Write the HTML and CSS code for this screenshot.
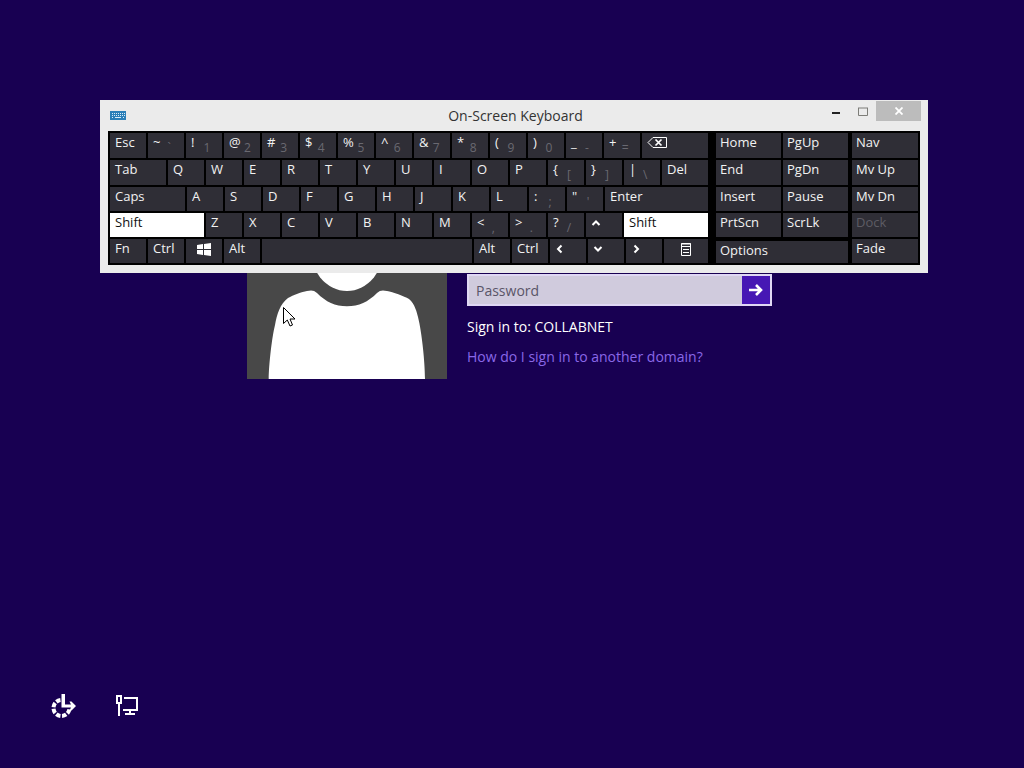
FILE: index.html
```html
<!DOCTYPE html>
<html lang="en">
  <head>
    <meta charset="utf-8"/>
    <title>Sign in</title>
    <meta name="viewport" content="width=device-width, initial-scale=1.0"/>
    <link rel="stylesheet" href="styles.css">
  </head>
  <body>
    <main class="signin">
      <svg class="avatar" viewBox="0 0 200 200" aria-hidden="true">
        <rect width="200" height="200" fill="#484848"/>
        <ellipse cx="100" cy="66" rx="38" ry="46" fill="#fff"/>
        <path d="M21.700 200C22 184 25 158 28 146C30 135 33 125 41 119C46 116 55 113 60 112C64 111 67 111 70 114C79 123 88 127.300 100 127.300C112 127.300 121 123 130 114C133 111 136 111 140 112C146 113 157 117 162 120C168 125 170 134 171 138C175 154 178 184 178 200Z" fill="#fff"/>
      </svg>
      <form class="login">
        <div class="password">
          <input type="password" placeholder="Password" aria-label="Password">
          <button class="submit" type="button" aria-label="Submit">
            <svg width="14" height="12" viewBox="0 0 14 12"><path d="M0 6H12M7 1L12 6L7 11" fill="none" stroke="#fff" stroke-width="2.600"/></svg>
          </button>
        </div>
        <p class="domain">Sign in to: COLLABNET</p>
        <a class="help" href="#">How do I sign in to another domain?</a>
      </form>
    </main>

    <footer class="tools">
      <button type="button" aria-label="Ease of access">
        <svg width="26" height="26" viewBox="0 0 26 26">
          <circle cx="10.500" cy="15" r="8" fill="none" stroke="#fff" stroke-width="4" pathLength="360" stroke-dasharray="32 12 32 12 32 12 32 12 32 12 32 98" stroke-dashoffset="-10"/>
          <path d="M10.500 1H14V11.500H20L18.500 8.500H20.500L25 13L20.500 17.500H18.500L20 14.500H10.500Z" fill="#fff"/>
        </svg>
      </button>
      <button type="button" aria-label="Network">
        <svg width="24" height="24" viewBox="0 0 24 24" fill="none" stroke="#fff" stroke-width="2">
          <path d="M9 4H22V16H8M15 16V20M10 20H20"/>
          <path d="M2 2H6V9H2ZM4 9V22"/>
        </svg>
      </button>
    </footer>

    <section class="window">
      <header class="titlebar">
        <svg class="app-icon" width="16" height="9" viewBox="0 0 16 9">
          <rect width="16" height="9" fill="#2b7fb8"/>
          <path d="M2 2.500H15M2 4.500H15" stroke="#d9ecf7" stroke-dasharray="1 1"/>
          <path d="M2 6.500H3M5 6.500H11M13 6.500H14" stroke="#d9ecf7"/>
        </svg>
        <h1>On-Screen Keyboard</h1>
        <div class="controls">
          <button class="minimize" type="button" aria-label="Minimize"><svg width="8" height="2"><rect width="8" height="2" fill="#222"/></svg></button>
          <button class="maximize" type="button" aria-label="Maximize"><svg width="10" height="9"><path d="M.5 1V8.500H9.500V1M0 1H10" fill="none" stroke="#7d7d78"/></svg></button>
          <button class="close" type="button" aria-label="Close"><svg width="8" height="8"><path d="M.5 .5L7.500 7.500M7.500 .5L.5 7.500" stroke="#fff" stroke-width="1.800"/></svg></button>
        </div>
      </header>

      <div class="keyboard">
        <div class="keys">
          <div class="row">
            <button class="key">Esc</button>
            <button class="key">~<sub>`</sub></button>
            <button class="key">!<sub>1</sub></button>
            <button class="key">@<sub>2</sub></button>
            <button class="key">#<sub>3</sub></button>
            <button class="key">$<sub>4</sub></button>
            <button class="key">%<sub>5</sub></button>
            <button class="key">^<sub>6</sub></button>
            <button class="key">&amp;<sub>7</sub></button>
            <button class="key">*<sub>8</sub></button>
            <button class="key">(<sub>9</sub></button>
            <button class="key">)<sub>0</sub></button>
            <button class="key">_<sub>-</sub></button>
            <button class="key">+<sub>=</sub></button>
            <button class="key backspace" aria-label="Backspace">
              <svg width="20" height="11" viewBox="0 0 20 11" fill="none" stroke="#fff"><path d="M6 .5H19.500V10.500H6L1 5.500Z"/><path d="M8.500 2.500L14.500 8.500M14.500 2.500L8.500 8.500" stroke-width="1.700"/></svg>
            </button>
          </div>
          <div class="row">
            <button class="key tab">Tab</button>
            <button class="key">Q</button>
            <button class="key">W</button>
            <button class="key">E</button>
            <button class="key">R</button>
            <button class="key">T</button>
            <button class="key">Y</button>
            <button class="key">U</button>
            <button class="key">I</button>
            <button class="key">O</button>
            <button class="key">P</button>
            <button class="key">{<sub>[</sub></button>
            <button class="key">}<sub>]</sub></button>
            <button class="key">|<sub>\</sub></button>
            <button class="key del">Del</button>
          </div>
          <div class="row">
            <button class="key caps">Caps</button>
            <button class="key">A</button>
            <button class="key">S</button>
            <button class="key">D</button>
            <button class="key">F</button>
            <button class="key">G</button>
            <button class="key">H</button>
            <button class="key">J</button>
            <button class="key">K</button>
            <button class="key">L</button>
            <button class="key">:<sub>;</sub></button>
            <button class="key">"<sub>'</sub></button>
            <button class="key enter">Enter</button>
          </div>
          <div class="row">
            <button class="key shift-left pressed">Shift</button>
            <button class="key">Z</button>
            <button class="key">X</button>
            <button class="key">C</button>
            <button class="key">V</button>
            <button class="key">B</button>
            <button class="key">N</button>
            <button class="key">M</button>
            <button class="key">&lt;<sub>,</sub></button>
            <button class="key">&gt;<sub>.</sub></button>
            <button class="key">?<sub>/</sub></button>
            <button class="key arrow" aria-label="Up"><svg width="10" height="10"><path d="M1.500 7L5 3.500L8.500 7"/></svg></button>
            <button class="key shift-right pressed">Shift</button>
          </div>
          <div class="row">
            <button class="key">Fn</button>
            <button class="key">Ctrl</button>
            <button class="key icon" aria-label="Windows">
              <svg width="14" height="13" viewBox="0 0 14 13" fill="#fff"><path d="M0 2L6 1V6H0ZM7 .9L14 0V6H7ZM0 7H6V12L0 11ZM7 7H14V13L7 12.100Z"/></svg>
            </button>
            <button class="key">Alt</button>
            <button class="key space" aria-label="Space"></button>
            <button class="key">Alt</button>
            <button class="key">Ctrl</button>
            <button class="key arrow" aria-label="Left"><svg width="10" height="10"><path d="M6.500 1.500L3 5L6.500 8.500"/></svg></button>
            <button class="key arrow" aria-label="Down"><svg width="10" height="10"><path d="M1.500 3L5 6.500L8.500 3"/></svg></button>
            <button class="key arrow" aria-label="Right"><svg width="10" height="10"><path d="M3.500 1.500L7 5L3.500 8.500"/></svg></button>
            <button class="key icon menu" aria-label="Menu">
              <svg width="10" height="13" viewBox="0 0 10 13" fill="none" stroke="#fff"><path d="M.5 .5H9.500V12.500H.5ZM0 3.500H10M2 6.500H8M2 9.500H8"/><path d="M0 1H10"/></svg>
            </button>
          </div>
        </div>

        <div class="nav">
          <button class="key">Home</button>
          <button class="key">PgUp</button>
          <button class="key">End</button>
          <button class="key">PgDn</button>
          <button class="key">Insert</button>
          <button class="key">Pause</button>
          <button class="key">PrtScn</button>
          <button class="key">ScrLk</button>
          <button class="key options">Options</button>
        </div>

        <div class="side">
          <button class="key">Nav</button>
          <button class="key">Mv Up</button>
          <button class="key">Mv Dn</button>
          <button class="key" disabled>Dock</button>
          <button class="key">Fade</button>
        </div>
      </div>
    </section>

    <svg class="cursor" width="16" height="22" viewBox="0 0 16 22">
      <path d="M.5 .5V16.500L4.300 13L7 19L9.500 18L7 12H12Z" fill="#fff" stroke="#000"/>
    </svg>
  </body>
</html>
```
FILE: styles.css
```css
* {
  box-sizing: border-box;
  font-family: "Open Sans", "Noto Sans", sans-serif;
}
body {
  display: flex;
  flex-direction: column;
  min-height: 100vh;
  margin: 0;
  background-color: #180052;
  color: white;
}
button {
  border: 0;
  padding: 0;
  background: none;
  color: inherit;
}
svg {
  display: block;
}

/* sign in form */
.signin {
  display: flex;
  justify-content: center;
  gap: 20px;
  padding: 179px 5px 0 0;
}
.avatar {
  width: 200px;
  height: 200px;
}
.login {
  width: 305px;
  padding-top: 95px;
  font-size: 14px;
  line-height: 20px;
}
.password {
  display: flex;
  height: 32px;
  border: 2px solid #e0d8f4;
  background-color: #d0cbdd;
}
.password input {
  flex: 1;
  min-width: 0;
  border: 0;
  padding: 0 7px;
  background: none;
  font-size: 14px;
}
.password input::placeholder {
  color: #5a5568;
}
.submit {
  display: flex;
  align-items: center;
  justify-content: center;
  width: 28px;
  background-color: #4617b4;
}
.domain {
  margin: 11px 0 10px;
}
.help {
  color: #8a68e8;
  text-decoration: none;
}

/* bottom left buttons */
.tools {
  display: flex;
  align-items: center;
  gap: 38px;
  margin-top: auto;
  padding: 0 51px 49px;
}

/* keyboard window */
.window {
  position: absolute;
  top: 100px;
  left: 100px;
  right: 96px;
  padding-bottom: 8px;
  background-color: #ebebeb;
}
.titlebar {
  display: grid;
  grid-template-columns: 1fr auto 1fr;
  align-items: center;
  height: 31px;
  padding: 0 7px 0 10px;
}
.titlebar h1 {
  margin: 0;
  color: #333;
  font-size: 14px;
  font-weight: normal;
}
.controls {
  display: flex;
  align-self: start;
  justify-content: flex-end;
  height: 21px;
  padding-top: 1px;
}
.controls button {
  display: flex;
  align-items: center;
  justify-content: center;
  width: 27px;
}
.controls .minimize {
  padding-top: 4px;
}
.controls .close {
  width: 45px;
  background-color: #bcbcbc;
}
.keyboard {
  display: flex;
  margin: 0 8px;
  padding: 2px;
  background-color: black;
}
.keys {
  flex: 598 1 0;
}
.keys,
.nav,
.side {
  display: grid;
  grid-template-rows: 25px 25px 24px 24px 24px;
  gap: 2px;
}
.nav {
  flex: 132 1 0;
  grid-template-columns: 1fr 1fr;
  margin: 0 4px 0 8px;
}
.side {
  flex: 66 1 0;
}
.row {
  display: flex;
  gap: 2px;
}
.key {
  display: flex;
  flex: 36 1 36px;
  justify-content: space-between;
  align-items: flex-start;
  min-width: 0;
  padding: 0 4px;
  background-color: #2f2e36;
  color: #f2f2f2;
  font-size: 13px;
  line-height: 19px;
}
.row .key {
  padding-left: 5px;
}
.key sub {
  width: 18px;
  padding-top: 6px;
  color: #6a6971;
  font-size: 12px;
  line-height: 18px;
  text-align: center;
}
.key:has(sub) {
  padding-right: 6px;
}
.key.pressed {
  background-color: white;
  color: #111;
}
.key:disabled {
  color: #5d5c64;
}
.row .icon {
  justify-content: center;
  padding: 4px 4px 0;
}
.arrow svg {
  margin-top: 5px;
  fill: none;
  stroke: white;
  stroke-width: 2px;
}
.backspace svg {
  margin-top: 4px;
}
.backspace {
  flex: 66 1 66px;
}
.tab {
  flex: 56 1 56px;
}
.del {
  flex: 46 1 46px;
}
.caps {
  flex: 75 1 75px;
}
.enter {
  flex: 103 1 103px;
}
.shift-left {
  flex: 94 1 94px;
}
.shift-right {
  flex: 84 1 84px;
}
.space {
  flex: 210 1 210px;
}
.menu {
  flex: 44 1 44px;
}
.options {
  grid-column: span 2;
  margin-top: 2px;
}

.cursor {
  position: absolute;
  top: 307px;
  left: 283px;
}
```
